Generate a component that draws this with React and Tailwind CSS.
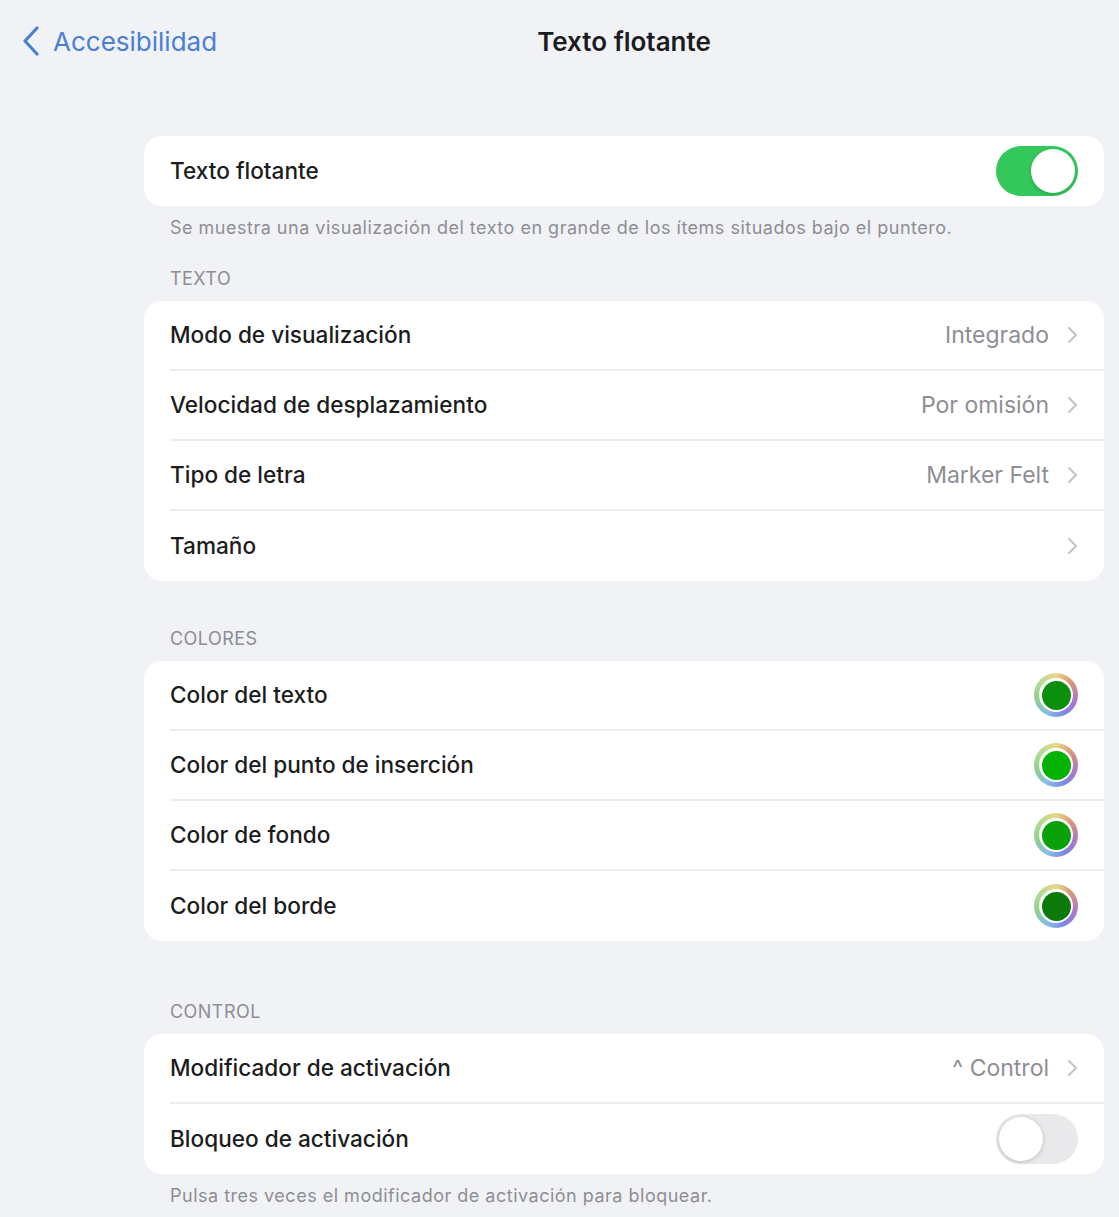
import React from 'react';

// --- Piezas pequeñas ---
function Chevron() {
    return (
        <svg width="11" height="18" viewBox="0 0 11 18" fill="none" className="shrink-0">
            <path d="M2 2l7 7-7 7" stroke="#c4c4c8" strokeWidth="2" strokeLinecap="round" strokeLinejoin="round" />
        </svg>
    );
}

function Toggle({ on }) {
    if (on) {
        return (
            <div className="w-[82px] h-[50px] rounded-full bg-[#34c759] p-[3px] flex justify-end">
                <div className="w-[44px] h-[44px] rounded-full bg-white shadow-[0_2px_4px_rgba(0,0,0,0.15)]" />
            </div>
        );
    }
    return (
        <div className="w-[82px] h-[50px] rounded-full bg-[#e9e9eb] p-[3px] flex justify-start">
            <div className="w-[44px] h-[44px] rounded-full bg-white shadow-[0_1px_4px_rgba(0,0,0,0.2)]" />
        </div>
    );
}

function ColorWell({ color }) {
    return (
        <div className="w-[44px] h-[44px] rounded-full bg-[conic-gradient(#e6d88a,#d8957a,#b476c8,#7d86e0,#86bde6,#8fd08f,#b2dc96,#e6d88a)] flex items-center justify-center">
            <div className="w-[34px] h-[34px] rounded-full bg-white flex items-center justify-center">
                <div className="w-[29px] h-[29px] rounded-full" style={{ backgroundColor: color }} />
            </div>
        </div>
    );
}

function Row({ label, value, right, last }) {
    return (
        <div className="pl-[26px] h-[70px] flex">
            <div className={`flex-1 flex items-center pr-[26px] ${last ? '' : 'border-b-2 border-[#ececf0]'}`}>
                <span className="flex-1 text-[22.6px] font-medium text-[#1c1c1e]">{label}</span>
                {value !== undefined && (
                    <div className="flex items-center gap-[18px]">
                        <span className="text-[23px] text-[#8e8e93]">{value}</span>
                        <Chevron />
                    </div>
                )}
                {right}
            </div>
        </div>
    );
}

function Card({ children }) {
    return <div className="bg-white rounded-[18px] overflow-hidden">{children}</div>;
}

function SectionTitle({ children }) {
    return <p className="pl-[26px] text-[18px] text-[#8e8e93] tracking-wide uppercase h-[22px] leading-[22px] mb-[11px]">{children}</p>;
}

function Footnote({ children }) {
    return <p className="pl-[26px] pt-[11px] text-[18px] tracking-[0.5px] text-[#8e8e93] leading-[22px]">{children}</p>;
}

export default function App() {
    const colores = [
        { label: 'Color del texto', color: '#0c8f0c' },
        { label: 'Color del punto de inserción', color: '#03b203' },
        { label: 'Color de fondo', color: '#0aa00a' },
        { label: 'Color del borde', color: '#0b7a0b' },
    ];

    return (
        <div className="min-h-[1217px] bg-[#f0f2f6] font-['Inter',sans-serif] antialiased">
            {/* Cabecera */}
            <div className="grid grid-cols-[144px_1fr_15px] h-[82px] items-center">
                <div className="flex items-center gap-[13px] pl-[22px] whitespace-nowrap">
                    <svg width="18" height="30" viewBox="0 0 18 30" fill="none" className="shrink-0">
                        <path d="M15 2L3 15l12 13" stroke="#4a80d4" strokeWidth="3.2" strokeLinecap="round" strokeLinejoin="round" />
                    </svg>
                    <span className="text-[26px] text-[#4a80d4]">Accesibilidad</span>
                </div>
                <h1 className="text-center text-[26px] font-semibold text-[#1c1c1e]">Texto flotante</h1>
                <div />
            </div>

            {/* Contenido */}
            <div className="pl-[144px] pr-[15px] pt-[54px] pb-[12px]">
                <Card>
                    <Row label="Texto flotante" last right={<Toggle on />} />
                </Card>
                <Footnote>Se muestra una visualización del texto en grande de los ítems situados bajo el puntero.</Footnote>

                <div className="mt-[29px]">
                    <SectionTitle>Texto</SectionTitle>
                    <Card>
                        <Row label="Modo de visualización" value="Integrado" />
                        <Row label="Velocidad de desplazamiento" value="Por omisión" />
                        <Row label="Tipo de letra" value="Marker Felt" />
                        <Row label="Tamaño" value="" last />
                    </Card>
                </div>

                <div className="mt-[47px]">
                    <SectionTitle>Colores</SectionTitle>
                    <Card>
                        {colores.map((c, i) => (
                            <Row key={c.label} label={c.label} last={i === colores.length - 1} right={<ColorWell color={c.color} />} />
                        ))}
                    </Card>
                </div>

                <div className="mt-[60px]">
                    <SectionTitle>Control</SectionTitle>
                    <Card>
                        <Row label="Modificador de activación" value="^ Control" />
                        <Row label="Bloqueo de activación" last right={<Toggle on={false} />} />
                    </Card>
                    <Footnote>Pulsa tres veces el modificador de activación para bloquear.</Footnote>
                </div>
            </div>
        </div>
    );
}
